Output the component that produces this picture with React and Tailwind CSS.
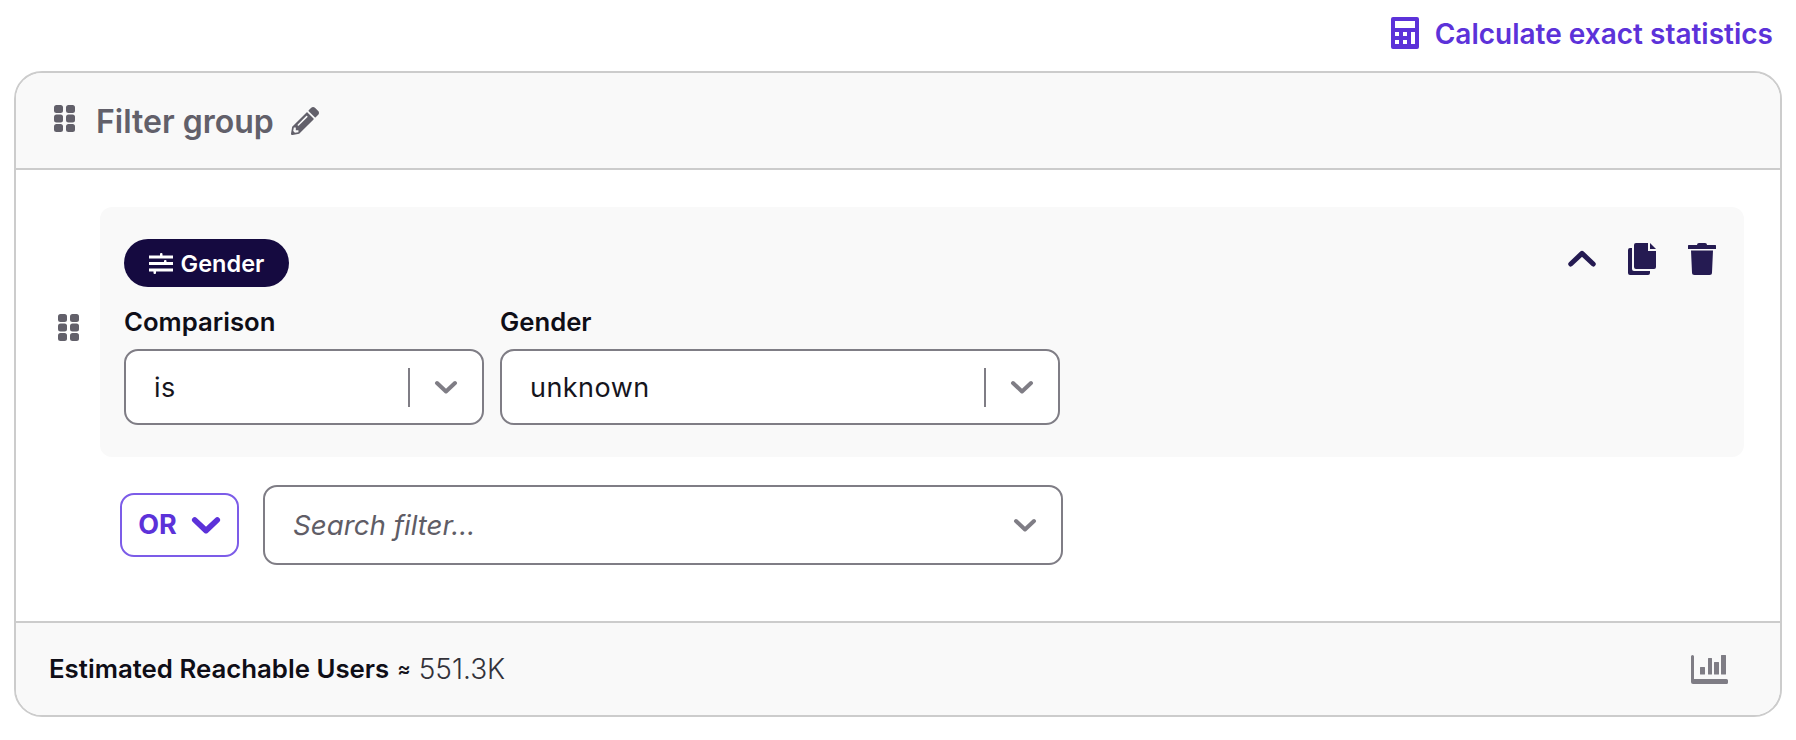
import React from 'react';
import { FaPencilAlt } from 'react-icons/fa';

const Grip = ({ className }) => (
  <svg viewBox="0 0 21 27" className={className} fill="currentColor">
    <rect x="0" y="0" width="9" height="8" rx="2.5" />
    <rect x="12" y="0" width="9" height="8" rx="2.5" />
    <rect x="0" y="9.5" width="9" height="8" rx="2.5" />
    <rect x="12" y="9.5" width="9" height="8" rx="2.5" />
    <rect x="0" y="19" width="9" height="8" rx="2.5" />
    <rect x="12" y="19" width="9" height="8" rx="2.5" />
  </svg>
);

const Chevron = ({ className, width = 4 }) => (
  <svg viewBox="0 0 24 14" className={className} fill="none" stroke="currentColor" strokeWidth={width} strokeLinecap="round" strokeLinejoin="round">
    <path d="M3 3l9 8.500 9-8.500" />
  </svg>
);

const Calculator = ({ className }) => (
  <svg viewBox="0 0 28 32" className={className}>
    <path fill="currentColor" fillRule="evenodd" d="M2 0h24a2 2 0 0 1 2 2v28a2 2 0 0 1-2 2H2a2 2 0 0 1-2-2V2a2 2 0 0 1 2-2zM4 4v7h20V4zM4 15v4h4v-4zM12 15v4h4v-4zM20 15v12h4V15zM4 23v4h4v-4zM12 23v4h4v-4z" />
  </svg>
);

const ChartIcon = ({ className }) => (
  <svg viewBox="0 0 37 29" className={className} fill="currentColor">
    <path d="M0 1.500a1.500 1.500 0 0 1 3 0V24h32.500a1.500 1.500 0 0 1 1.500 1.500v2a1.500 1.500 0 0 1-1.500 1.500H2a2 2 0 0 1-2-2z" />
    <rect x="9" y="12" width="5" height="7.500" rx="0.500" />
    <rect x="17" y="3" width="4" height="16.500" rx="0.500" />
    <rect x="23" y="7" width="5" height="12.500" rx="0.500" />
    <rect x="30" y="0" width="5" height="19.500" rx="0.500" />
  </svg>
);

const SlidersIcon = ({ className }) => (
  <svg viewBox="0 0 24 21" className={className} fill="currentColor">
    <rect x="0" y="2.500" width="24" height="3" />
    <rect x="0" y="9" width="24" height="3" />
    <rect x="0" y="15.500" width="24" height="3" />
    <rect x="11" y="0" width="2.500" height="4" rx="1" />
    <rect x="15" y="7" width="2.500" height="4" rx="1" />
    <rect x="4.500" y="17" width="2.500" height="4" rx="1" />
  </svg>
);

const CopyIcon = ({ className }) => (
  <svg viewBox="0 0 28 32" className={className} fill="currentColor">
    <path d="M2 5h2v21a2 2 0 0 0 2 2h16v2a2 2 0 0 1-2 2H2a2 2 0 0 1-2-2V7a2 2 0 0 1 2-2z" />
    <path d="M8 0h12v8h8v16a2 2 0 0 1-2 2H8a2 2 0 0 1-2-2V2a2 2 0 0 1 2-2z" />
    <path d="M22 0l6 6h-6z" />
  </svg>
);

const TrashIcon = ({ className }) => (
  <svg viewBox="0 0 28 32" className={className} fill="currentColor">
    <path d="M9 2a2 2 0 0 1 2-2h6a2 2 0 0 1 2 2z" />
    <rect x="0" y="2" width="28" height="4" rx="0.500" />
    <path d="M3 7.500h22l-1 22a2.500 2.500 0 0 1-2.500 2.500H6.500A2.500 2.500 0 0 1 4 29.500z" />
  </svg>
);

const SelectBox = ({ value, className }) => (
  <div className={`h-[76px] rounded-[14px] border-2 border-[#7f7d85] bg-white flex items-center pl-[28px] ${className}`}>
    <span className="flex-1 text-[27px] text-[#16151d] tracking-[0.45px] pt-[2px]">{value}</span>
    <div className="w-[2px] h-[39px] bg-[#7f7d85]" />
    <div className="w-[72px] flex justify-center">
      <Chevron className="w-[24px] h-[14px] text-[#7f7d85]" />
    </div>
  </div>
);

const Field = ({ label, value, className }) => (
  <div className="flex flex-col">
    <span className="text-[25.7px] leading-[30px] font-semibold text-[#0f0e17] mb-[12px]">{label}</span>
    <SelectBox value={value} className={className} />
  </div>
);

export default function App() {
  return (
    <div className="h-[740px] bg-white px-[14px] text-[#16151d] font-['Inter',sans-serif]">
      <div className="h-[71px] flex items-start justify-end pt-[17px] pr-[9px] gap-[16px] text-[#5c32d9]">
        <Calculator className="w-[28px] h-[32px]" />
        <span className="text-[28px] leading-[32px] font-semibold pt-[1px]">Calculate exact statistics</span>
      </div>

      <div className="h-[646px] flex flex-col rounded-[28px] border-2 border-[#cccccc] overflow-hidden">
        <div className="h-[97px] shrink-0 flex items-center bg-[#f9f9f9] border-b-2 border-[#cccccc] pl-[38px] pb-[1px]">
          <Grip className="w-[21px] h-[27px] text-[#62606a] mb-[3px]" />
          <span className="ml-[21px] text-[32px] font-semibold text-[#62606a] pt-[3px]">Filter group</span>
          <FaPencilAlt className="ml-[17px] w-[28px] h-[28px] text-[#62606a] mt-[2px]" />
        </div>

        <div className="flex-1 pt-[37px]">
          <div className="flex items-center">
            <div className="w-[84px] pl-[42px] shrink-0">
              <Grip className="w-[21px] h-[27px] text-[#62606a] mb-[10px]" />
            </div>
            <div className="w-[1644px] h-[250px] rounded-[12px] bg-[#f9f9f9] px-[24px] pt-[32px] flex justify-between">
              <div>
                <div className="w-[165px] h-[48px] rounded-full bg-[#150a40] text-white flex items-center justify-center gap-[8px]">
                  <SlidersIcon className="w-[24px] h-[21px]" />
                  <span className="text-[23.5px] font-semibold pt-[1px]">Gender</span>
                </div>
                <div className="flex gap-[16px] mt-[20px]">
                  <Field label="Comparison" value="is" className="w-[360px]" />
                  <Field label="Gender" value="unknown" className="w-[560px]" />
                </div>
              </div>
              <div className="flex items-start text-[#251b52] pr-[4px] pt-[4px]">
                <Chevron className="w-[30px] h-[18px] mt-[7px] rotate-180" width={4} />
                <CopyIcon className="w-[28px] h-[32px] ml-[31px]" />
                <TrashIcon className="w-[28px] h-[32px] ml-[32px]" />
              </div>
            </div>
          </div>

          <div className="flex items-center mt-[28px] ml-[104px] gap-[24px]">
            <div className="w-[119px] h-[64px] rounded-[14px] border-2 border-[#7c5ce8] flex items-center justify-center gap-[14px] text-[#5c32d9]">
              <span className="text-[27px] font-bold pt-[1px]">OR</span>
              <Chevron className="w-[30px] h-[18px]" width={4.500} />
            </div>
            <div className="w-[800px] h-[80px] rounded-[14px] border-2 border-[#7f7d85] bg-white flex items-center pl-[28px] pr-[24px]">
              <span className="flex-1 text-[27.7px] italic text-[#5f5d66] pt-[1px]">Search filter...</span>
              <Chevron className="w-[24px] h-[14px] text-[#7f7d85]" />
            </div>
          </div>
        </div>

        <div className="h-[94px] shrink-0 flex items-center bg-[#f9f9f9] border-t-2 border-[#cccccc] pl-[33px] pr-[52px]">
          <span className="text-[25.8px] font-semibold text-[#0f0e17]">Estimated Reachable Users</span>
          <span className="ml-[8px] text-[20px] font-semibold">≈</span>
          <span className="ml-[8px] text-[28px] font-light text-[#33323a]">551.3K</span>
          <ChartIcon className="ml-auto w-[37px] h-[29px] text-[#7f7d85]" />
        </div>
      </div>
    </div>
  );
}
